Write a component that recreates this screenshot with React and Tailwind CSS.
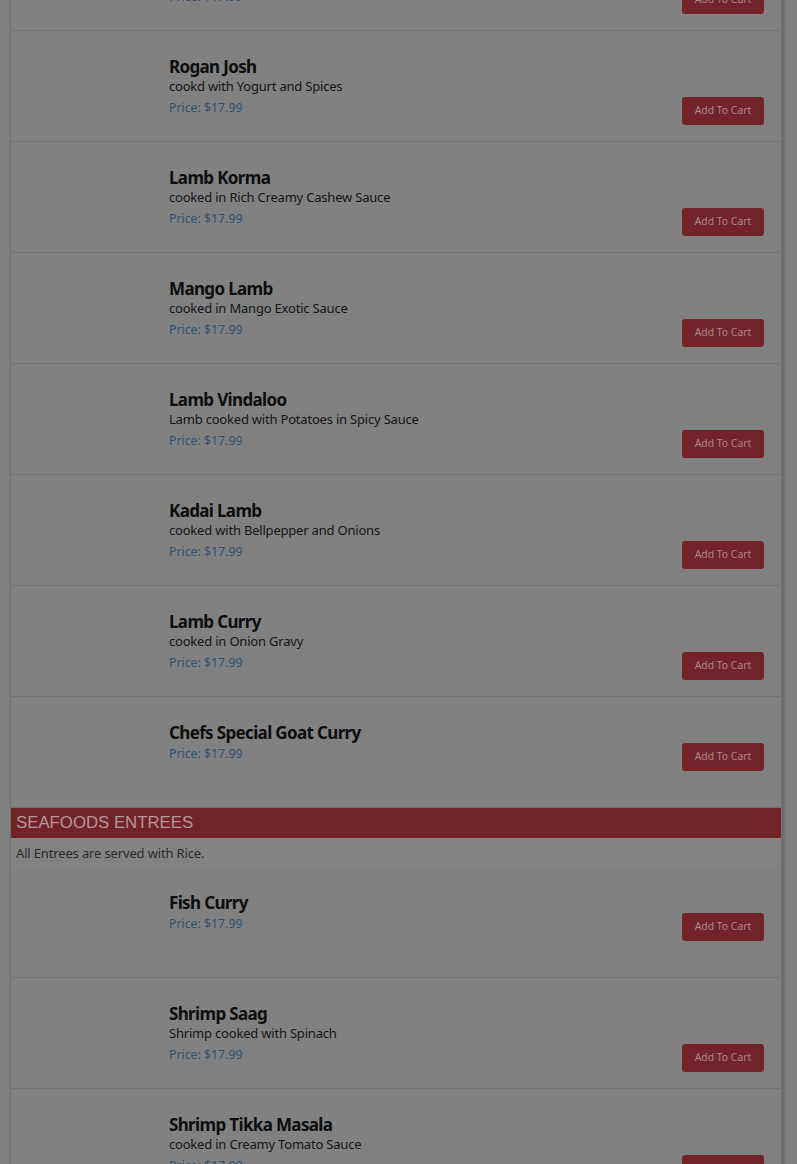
const lamb = [
  { name: "Rogan Josh", desc: "cookd with Yogurt and Spices" },
  { name: "Lamb Korma", desc: "cooked in Rich Creamy Cashew Sauce" },
  { name: "Mango Lamb", desc: "cooked in Mango Exotic Sauce" },
  { name: "Lamb Vindaloo", desc: "Lamb cooked with Potatoes in Spicy Sauce" },
  { name: "Kadai Lamb", desc: "cooked with Bellpepper and Onions" },
  { name: "Lamb Curry", desc: "cooked in Onion Gravy" },
  { name: "Chefs Special Goat Curry" },
];

const seafood = [
  { name: "Fish Curry" },
  { name: "Shrimp Saag", desc: "Shrimp cooked with Spinach" },
  { name: "Shrimp Tikka Masala", desc: "cooked in Creamy Tomato Sauce" },
];

function MenuItem({ item }) {
  return (
    <div className="flex h-[111px] shrink-0 border-b border-[#737373]">
      <div className="w-[158px] shrink-0" />
      <div className="flex-1 pr-4 pt-[25px]">
        <h3 className="text-[17px] font-bold leading-[21px] tracking-[-0.65px] text-[#0d0d0d]">{item.name}</h3>
        {item.desc && (
          <p className="-mt-[1px] text-[13px] leading-[20px] tracking-[-0.2px] text-[#141414]">{item.desc}</p>
        )}
        <div className={`flex items-start justify-between ${item.desc ? "mt-[2px]" : "mt-[1px]"}`}>
          <span className="text-[12.3px] leading-[20px] text-[#33506d]">Price: $17.99</span>
          <button
            type="button"
            className="mr-[1px] -mt-[1px] h-[28px] w-[82px] rounded-[3px] bg-[#73242a] text-[10.4px] text-[#a8898c]"
          >
            Add To Cart
          </button>
        </div>
      </div>
    </div>
  );
}

export default function App() {
  return (
    <div
      className="min-h-screen overflow-hidden bg-[#7f7f7f] pl-[10px]"
      style={{ fontFamily: '"Noto Sans", "Open Sans", sans-serif' }}
    >
      <div className="-mt-[80px] flex h-[1260px] w-[772px] flex-col border-x border-[#727272] bg-[#818181] shadow-[2px_0_3px_rgba(0,0,0,0.2)]">
        <MenuItem item={{ name: "Saag Lamb", desc: "cooked with Spinach" }} />
        {lamb.map(item => (
          <MenuItem key={item.name} item={item} />
        ))}

        {/* Seafood section */}
        <div className="flex h-[30px] shrink-0 items-center bg-[#722327] px-[5px]">
          <h2
            className="text-[16.8px] uppercase text-[#b4979a]"
            style={{ fontFamily: '"Liberation Sans", Arial, sans-serif' }}
          >
            Seafoods Entrees
          </h2>
        </div>
        <div className="flex h-[29px] shrink-0 items-center bg-[#838383] px-[5px] pt-[3px]">
          <p className="text-[13px] tracking-[-0.15px] text-[#2b2b2b]">All Entrees are served with Rice.</p>
        </div>
        {seafood.map(item => (
          <MenuItem key={item.name} item={item} />
        ))}
      </div>
    </div>
  );
}
